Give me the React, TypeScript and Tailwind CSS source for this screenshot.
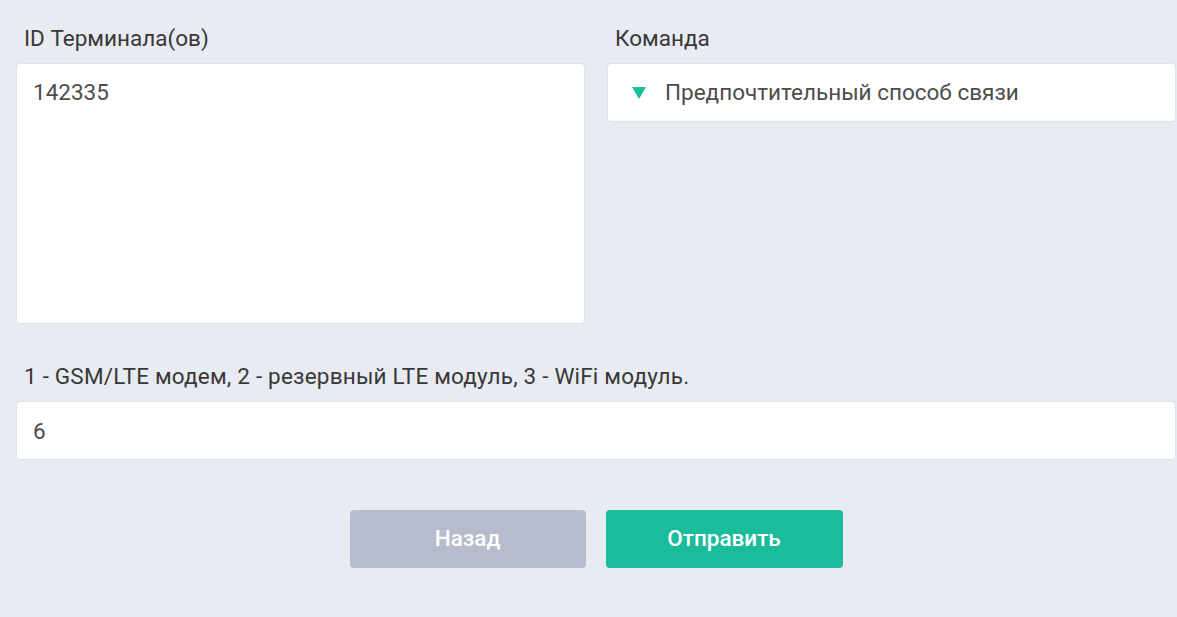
import React, {useState} from "react";

const font = "font-['Roboto',_'Liberation_Sans',_sans-serif]";

const App: React.FC = () => {
  const [ids, setIds] = useState<string>('142335')
  const [value, setValue] = useState<string>('6')

  return (
    <div className={`${font} w-full h-[617px] bg-[#e8ebf2] pl-[16px] pr-[1px] pt-[24px] text-[#383838]`}>
      <div className="grid grid-cols-2 gap-[22px]">
        <div className="flex flex-col">
          <label className="pl-[8px] text-[22.5px] leading-[28px] mb-[11px]">ID Терминала(ов)</label>
          <textarea
            className="h-[261px] resize-none bg-white border border-[#dfe2e8] rounded-[4px] px-[16px] py-[14px] text-[22.5px] leading-[28px] text-[#4d4d4d] outline-none"
            value={ids}
            onChange={e => setIds(e.target.value)}
          />
        </div>
        <div className="flex flex-col">
          <label className="pl-[8px] text-[22.5px] leading-[28px] mb-[11px]">Команда</label>
          <div className="h-[59px] flex items-center bg-white border border-[#dfe2e8] rounded-[4px] pl-[24px] text-[22.5px] text-[#4d4d4d]">
            <svg width="14" height="12" viewBox="0 0 14 12" className="mr-[19px] mt-[1px]">
              <path d="M0 0 L14 0 L7 12 Z" fill="#1abc9c" />
            </svg>
            <span>Предпочтительный способ связи</span>
          </div>
        </div>
      </div>

      <div className="flex flex-col mt-[38px]">
        <label className="pl-[8px] text-[22.5px] leading-[28px] mb-[11px] tracking-[0.2px]">1 - GSM/LTE модем, 2 - резервный LTE модуль, 3 - WiFi модуль.</label>
        <input
          className="h-[59px] bg-white border border-[#dfe2e8] rounded-[4px] px-[16px] text-[22.5px] text-[#4d4d4d] outline-none"
          value={value}
          onChange={e => setValue(e.target.value)}
        />
      </div>

      <div className="flex justify-center gap-[20px] mt-[50px]">
        <button className="w-[236px] h-[58px] rounded-[4px] bg-[#b6bccc] text-white text-[22.5px] font-medium">Назад</button>
        <button className="w-[237px] h-[58px] rounded-[4px] bg-[#1abc9c] text-white text-[22.5px] font-medium">Отправить</button>
      </div>
    </div>
  )
}

export default App;
